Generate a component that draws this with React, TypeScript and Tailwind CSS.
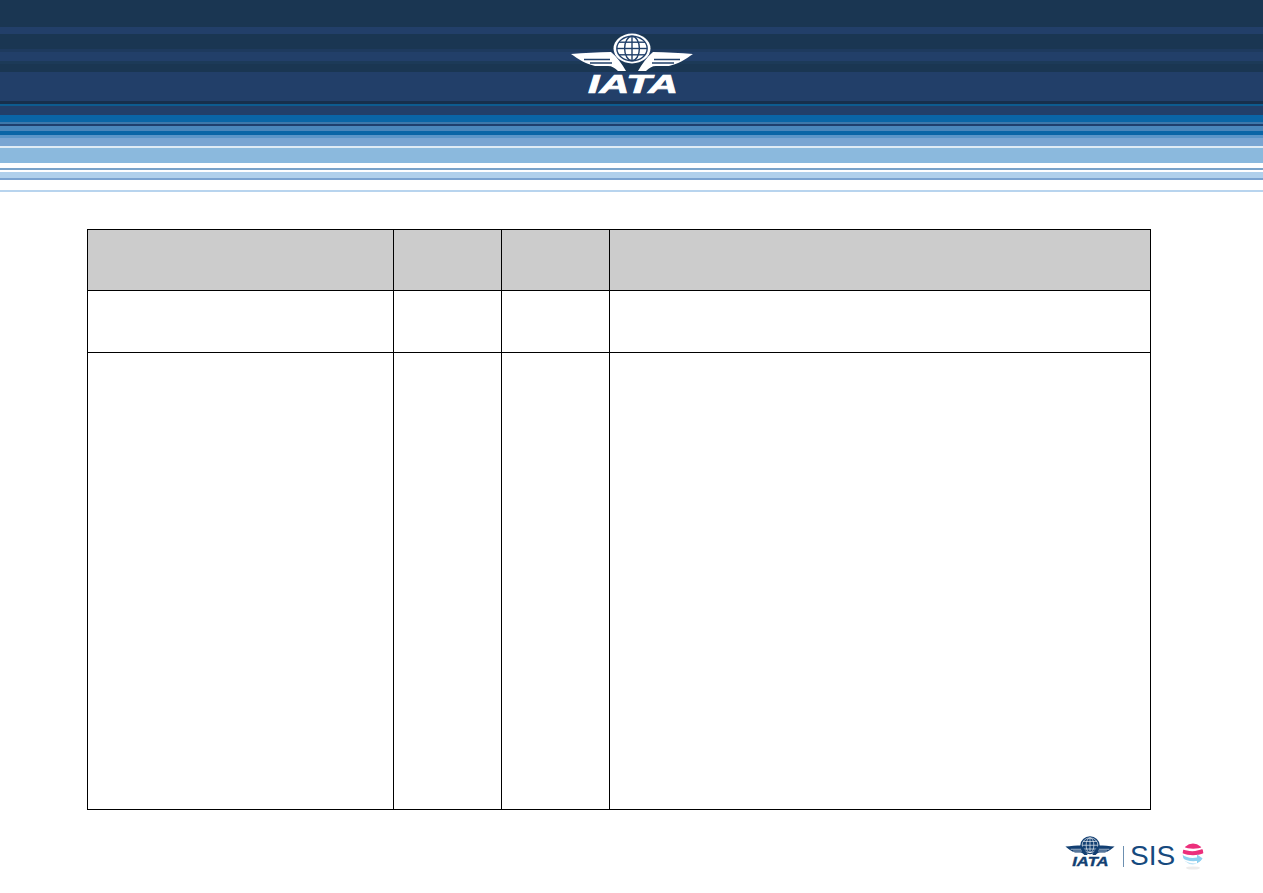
const bands = [
  'h-[27px] bg-[#1a3652]',
  'h-[7px] bg-[#223f69]',
  'h-[15px] bg-[#1a3652]',
  'h-[3px] bg-[#1e3a5e]',
  'h-[9px] bg-[#223f69]',
  'h-[3px] bg-[#1c3a58]',
  'h-[8px] bg-[#1a3652]',
  'h-[29px] bg-[#223f69]',
  'h-[3px] bg-[#172f4c]',
  'h-[2px] bg-[#0d5b8f]',
  'h-[9px] bg-[#223f69]',
  'h-[7px] bg-[#0a65a6]',
  'h-[2px] bg-[#3e78ab]',
  'h-[2px] bg-[#1e3f6e]',
  'h-[5px] bg-[#4a86bb]',
  'h-[4px] bg-[#0a65a6]',
  'h-[3px] bg-[#5b95c8]',
  'h-[8px] bg-[#79a5d2]',
  'h-[2px] bg-[#e0ecf5]',
  'h-[15px] bg-[#8bb9dd]',
  'h-[5px] bg-white',
  'h-[2px] bg-[#7ba3c9]',
  'h-[2px] bg-white',
  'h-[6px] bg-[#b0d0ec]',
  'h-[2px] bg-[#7ba3d0]',
  'h-[10px] bg-white',
  'h-[2px] bg-[#b8d4ee]',
]

interface IataMarkProps {
  color: string
  cut: string
  rx: number
  ry: number
  cy: number
  className: string
}

const IataMark = ({ color, cut, rx, ry, cy, className }: IataMarkProps) => (
  <svg viewBox="0 0 124 62" preserveAspectRatio="none" className={className}>
    {/* Globe */}
    <ellipse cx="62" cy={cy} rx={rx} ry={ry} fill={color} />
    <g fill="none" stroke={cut} strokeWidth="1.4">
      <ellipse cx="62" cy={cy} rx={rx * 0.82} ry={ry * 0.82} />
      <ellipse cx="62" cy={cy} rx={rx * 0.4} ry={ry * 0.82} />
      <path d={`M62 ${cy - ry * 0.82}V${cy + ry * 0.82}`} />
      <path d={`M${62 - rx * 0.82} ${cy}H${62 + rx * 0.82}`} />
      <path d={`M${62 - rx * 0.7} ${cy - ry * 0.42}H${62 + rx * 0.7}`} />
      <path d={`M${62 - rx * 0.7} ${cy + ry * 0.42}H${62 + rx * 0.7}`} />
    </g>
    {/* Wings */}
    <g fill={color}>
      <path d="M1 21C14 20 28 19 41 19C47 24 52 31 56 38H48C45 35 42 33 38 33H25C16 31 8 26 1 21Z" />
      <path d="M123 21C110 20 96 19 83 19C77 24 72 31 68 38H76C79 35 82 33 86 33H99C108 31 116 26 123 21Z" />
    </g>
    <g stroke={cut} strokeWidth="1.3">
      <path d="M14 26.5H40M20 30H42" />
      <path d="M110 26.5H84M104 30H82" />
    </g>
    <text
      x="18"
      y="60"
      textLength="90"
      lengthAdjust="spacingAndGlyphs"
      fill={color}
      stroke={color}
      strokeWidth="0.7"
      fontFamily="'Liberation Sans', sans-serif"
      fontWeight="700"
      fontStyle="italic"
      fontSize="25"
    >
      IATA
    </text>
  </svg>
)

const SisBall = () => (
  <svg viewBox="0 0 22 28" className="h-[28px] w-[22px]">
    <defs>
      <clipPath id="ball">
        <circle cx="11" cy="11" r="10.5" />
      </clipPath>
    </defs>
    <ellipse cx="11" cy="25" rx="7" ry="1.6" fill="#ececec" />
    <g clipPath="url(#ball)">
      <rect width="22" height="22" fill="#ffffff" />
      <path d="M0 0H22V3.5C15 6.5 7 6.5 1 3.5Z" fill="#ec2f7b" />
      <path d="M0 6C7 9 15 9 22 5V10C15 13 7 13 0 10Z" fill="#ec2f7b" />
      <path d="M0 11.5C4 14.5 9 15.5 15 14.5V11.5L21.5 16L15 20.5V18C8 18.5 3 17.5 0 15Z" fill="#8fd0ef" />
      <path d="M1 16.5C5 19.5 10 20.5 15 20.5L11 22H5Z" fill="#bfe4f6" />
    </g>
  </svg>
)

const rows = ['h-[61px]', 'h-[62px]', 'h-[457px]']

const App = () => {
  return (
    <div className="h-[893px] overflow-hidden bg-white font-['Liberation_Sans',sans-serif]">
      {/* Striped banner */}
      <header className="relative">
        {bands.map((band, i) => (
          <div key={i} className={band} />
        ))}
        <div className="absolute left-[570px] top-[33px]">
          <IataMark color="#ffffff" cut="#21406a" rx={18.5} ry={15} cy={15.5} className="block h-[62px] w-[124px] overflow-visible" />
        </div>
      </header>

      {/* Empty table */}
      <div className="mt-[37px] px-[87px]">
        <table className="w-[1064px] table-fixed border-collapse">
          <colgroup>
            <col className="w-[306px]" />
            <col className="w-[108px]" />
            <col className="w-[108px]" />
            <col />
          </colgroup>
          <tbody>
            {rows.map((row, i) => (
              <tr key={i} className={row}>
                {[0, 1, 2, 3].map((c) => (
                  <td key={c} className={`border border-black ${i === 0 ? 'bg-[#cccccc]' : ''}`} />
                ))}
              </tr>
            ))}
          </tbody>
        </table>
      </div>

      {/* Footer logos */}
      <footer className="mt-[25px] flex items-start pl-[1065px]">
        <IataMark color="#123f72" cut="#ffffff" rx={24} ry={18} cy={18.5} className="mt-[1px] block h-[31px] w-[50px] overflow-visible" />
        <div className="ml-[8px] mt-[11px] h-[21px] w-px bg-[#6c8fb0]" />
        <span className="ml-[6px] mt-[5px] text-[28px] leading-[32px] text-[#164a7e]">SIS</span>
        <div className="ml-[7px] mt-[8px]">
          <SisBall />
        </div>
      </footer>
    </div>
  )
}

export default App
